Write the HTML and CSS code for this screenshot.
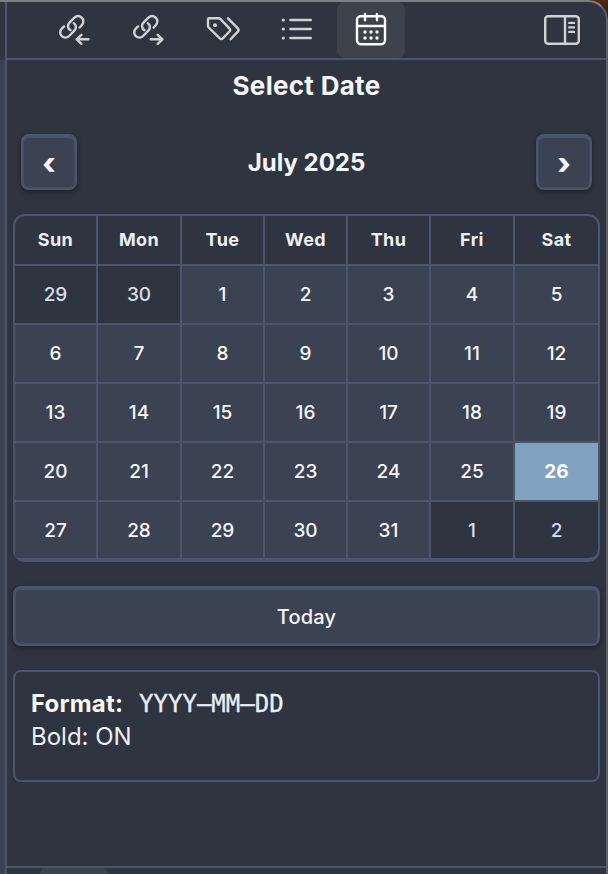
FILE: index.html
```html
<!DOCTYPE html>
<html lang="en">
<head>
<meta charset="utf-8">
<title>Select Date</title>
<link rel="stylesheet" href="styles.css">
</head>
<body>
<div class="window">
  <div class="editor-edge"></div>
  <main class="sidebar">
    <nav class="tabs">
      <button class="tab" aria-label="Backlinks">
        <svg width="34" height="34" viewBox="2 1.5 34 34"><path d="M23.7 16l2-2.2c2.3-2.6 2.1-5.9-.2-7.8-2.2-1.9-5-1.8-7.1.2l-4.7 4.7c-2.7 2.7-1.9 6.4.8 7.7M8 14.9l-2 2c-2.4 2.4-2.4 5.7-.2 7.7 2.1 2 5.2 2 7.3-.1l5-5.1c2.5-2.6 2.4-6-.3-7.7M32.4 27.8H20.7M25.4 23.3l-4.7 4.5 4.7 4.5"/></svg>
      </button>
      <button class="tab" aria-label="Outgoing links">
        <svg width="34" height="34" viewBox="2 1.5 34 34"><path d="M23.7 16l2-2.2c2.3-2.6 2.1-5.9-.2-7.8-2.2-1.9-5-1.8-7.1.2l-4.7 4.7c-2.7 2.7-1.9 6.4.8 7.7M8 14.9l-2 2c-2.4 2.4-2.4 5.7-.2 7.7 2.1 2 5.2 2 7.3-.1l5-5.1c2.5-2.6 2.4-6-.3-7.7M20.7 27.8H32.4M27.7 23.3l4.7 4.5-4.7 4.5"/></svg>
      </button>
      <button class="tab" aria-label="Tags">
        <svg width="34" height="34" viewBox="0 .7 34 34"><path d="M3.2 6h9.3q1.2 0 2 .8l8.9 9.2q1.5 1.6 0 3.2L16.8 26q-1.5 1.4-3 0L2.8 15.4q-.8-.8-.8-2V7.2Q2 6 3.2 6zM22 6l9.8 10.1q1.5 1.6 0 3.2L24.6 27"/><circle class="solid" cx="9" cy="13" r="2"/></svg>
      </button>
      <button class="tab" aria-label="Outline">
        <svg width="34" height="34" viewBox="0 .9 34 34"><path d="M10.4 7.9h20.4M10.4 16.9h20.4M10.4 25.9h20.4"/><g class="solid"><circle cx="3.3" cy="7.9" r="1.6"/><circle cx="3.3" cy="16.9" r="1.6"/><circle cx="3.3" cy="25.9" r="1.6"/></g></svg>
      </button>
      <button class="tab active" aria-label="Calendar">
        <svg width="34" height="34" viewBox="0 1 34 34"><rect x="3" y="4.2" width="28" height="28" rx="3.6"/><path d="M3 14h28M11 1.9v6.4M23 1.9v6.4"/><g class="solid"><circle cx="11" cy="20" r="1.7"/><circle cx="17" cy="20" r="1.7"/><circle cx="23" cy="20" r="1.7"/><circle cx="11" cy="26" r="1.7"/><circle cx="17" cy="26" r="1.7"/><circle cx="23" cy="26" r="1.7"/></g></svg>
      </button>
      <button class="tab toggle" aria-label="Toggle sidebar">
        <svg width="36" height="30" viewBox="0 0 36 30"><rect x="1.2" y="1.2" width="33.6" height="27.6" rx="3"/><path d="M21 1v28M25.3 7.9H30M25.3 12.4H30M25.3 16.9H30"/></svg>
      </button>
    </nav>
    <section class="view">
      <h1>Select Date</h1>
      <div class="month-nav">
        <button class="step">‹</button>
        <h2>July 2025</h2>
        <button class="step">›</button>
      </div>
      <div class="calendar">
        <b>Sun</b><b>Mon</b><b>Tue</b><b>Wed</b><b>Thu</b><b>Fri</b><b>Sat</b>
        <span class="other">29</span><span class="other">30</span><span>1</span><span>2</span><span>3</span><span>4</span><span>5</span>
        <span>6</span><span>7</span><span>8</span><span>9</span><span>10</span><span>11</span><span>12</span>
        <span>13</span><span>14</span><span>15</span><span>16</span><span>17</span><span>18</span><span>19</span>
        <span>20</span><span>21</span><span>22</span><span>23</span><span>24</span><span>25</span><span class="today">26</span>
        <span>27</span><span>28</span><span>29</span><span>30</span><span>31</span><span class="other">1</span><span class="other">2</span>
      </div>
      <button class="today-button">Today</button>
      <div class="format">
        <div><strong>Format:</strong><code>YYYY–MM–DD</code></div>
        <div>Bold: ON</div>
      </div>
    </section>
    <footer class="bottom"><div class="bottom-tab"></div></footer>
  </main>
</div>
</body>
</html>
```
FILE: styles.css
```css
* { box-sizing: border-box; }
body {
  margin: 0;
  background: linear-gradient(#54291a, #0c0d10 26px);
  font-family: Inter, "Liberation Sans", sans-serif;
  color: #f4f6f9;
}
button { font: inherit; color: inherit; border: 0; padding: 0; background: none; }
.window {
  display: flex;
  height: 874px;
  overflow: hidden;
  background: #2e3440;
  border-top: 2px solid #7b8086;
  border-right: 2px solid #5b606b;
  border-top-right-radius: 20px;
}
.editor-edge { width: 5px; margin-top: 58px; background: #3b4252; }
.sidebar {
  flex: 1;
  display: flex;
  flex-direction: column;
  border-left: 2px solid #4c566a;
}
.tabs {
  display: flex;
  height: 58px;
  padding-left: 34px;
  gap: 6px;
  border-bottom: 2px solid #4c566a;
}
.tab {
  display: flex;
  align-items: center;
  justify-content: center;
  width: 68px;
  height: 56px;
  border-radius: 8px;
  color: #d0d2d7;
}
.tab svg {
  fill: none;
  stroke: currentColor;
  stroke-width: 2.4;
  stroke-linecap: round;
  stroke-linejoin: round;
}
.tab .solid { fill: currentColor; stroke: none; }
.tab.active { background: #3d424d; color: #fafafb; }
.toggle { margin-left: auto; margin-right: 10px; }
.view { flex: 1; padding: 0 6px; }
h1 {
  margin: 11px 0 0;
  height: 30px;
  line-height: 30px;
  font-size: 26px;
  font-weight: 700;
  letter-spacing: .3px;
  text-align: center;
}
.month-nav {
  display: flex;
  align-items: center;
  justify-content: space-between;
  height: 56px;
  margin: 33px 8px 24px;
}
h2 { margin: 0; font-size: 24px; font-weight: 650; }
.step {
  width: 56px;
  height: 56px;
  padding-top: 1px;
  border: 2px solid #4c566a;
  border-radius: 8px;
  background: #3b4252;
  box-shadow: inset 0 2px 1px #4c566a, inset 0 0 1px 1px #454e61, 0 2px 5px rgba(0, 0, 0, .4);
  font-size: 30px;
  font-weight: 800;
  line-height: 44px;
}
.calendar {
  display: grid;
  grid-template-columns: 81px 82px 81px 81px 81px 82px 83px;
  grid-template-rows: 48px 57px 57px 57px 57px 56px;
  gap: 2px;
  height: 348px;
  padding: 2px 2px 4px;
  border-radius: 12px;
  background: #4c566a;
  overflow: hidden;
  font-size: 19px;
}
.calendar > * {
  display: flex;
  align-items: center;
  justify-content: center;
  background: #3b4252;
  font-weight: 500;
}
.calendar b {
  padding-bottom: 1px;
  background: #2e3440;
  color: #eceff4;
  font-size: 18px;
  font-weight: 650;
  letter-spacing: .4px;
}
.calendar b:first-child { border-top-left-radius: 10px; }
.calendar b:nth-child(7) { border-top-right-radius: 10px; }
.calendar span:last-child { border-bottom-right-radius: 9px; }
.calendar .other { background: #2e3440; color: #d8dee9; font-weight: 450; }
.calendar .today { background: #81a1c1; color: #fff; font-weight: 700; }
.today-button {
  display: block;
  width: 587px;
  height: 60px;
  margin-top: 24px;
  padding-top: 2px;
  border: 2px solid #4c566a;
  border-radius: 8px;
  background: #3b4252;
  box-shadow: inset 0 2px 1px #4c566a, inset 0 0 1px 1px #454e61, 0 2px 5px rgba(0, 0, 0, .4);
  font-size: 20px;
  font-weight: 550;
  letter-spacing: .2px;
}
.format {
  width: 587px;
  height: 112px;
  margin-top: 24px;
  padding: 15px 16px;
  border: 2px solid #4c566a;
  border-radius: 8px;
  color: #eceff4;
  font-size: 24px;
  line-height: 33px;
}
.format div { height: 33px; white-space: nowrap; }
strong { font-weight: 700; letter-spacing: .2px; color: #f8f9fb; }
code {
  margin-left: 16px;
  font-family: "DejaVu Sans Mono", "Liberation Mono", monospace;
  font-size: 24px;
  -webkit-text-stroke: .3px;
}
.bottom { height: 8px; padding-left: 33px; border-top: 2px solid #4c566a; }
.bottom-tab { width: 68px; height: 6px; border-radius: 8px 8px 0 0; background: #3d424d; }
```
